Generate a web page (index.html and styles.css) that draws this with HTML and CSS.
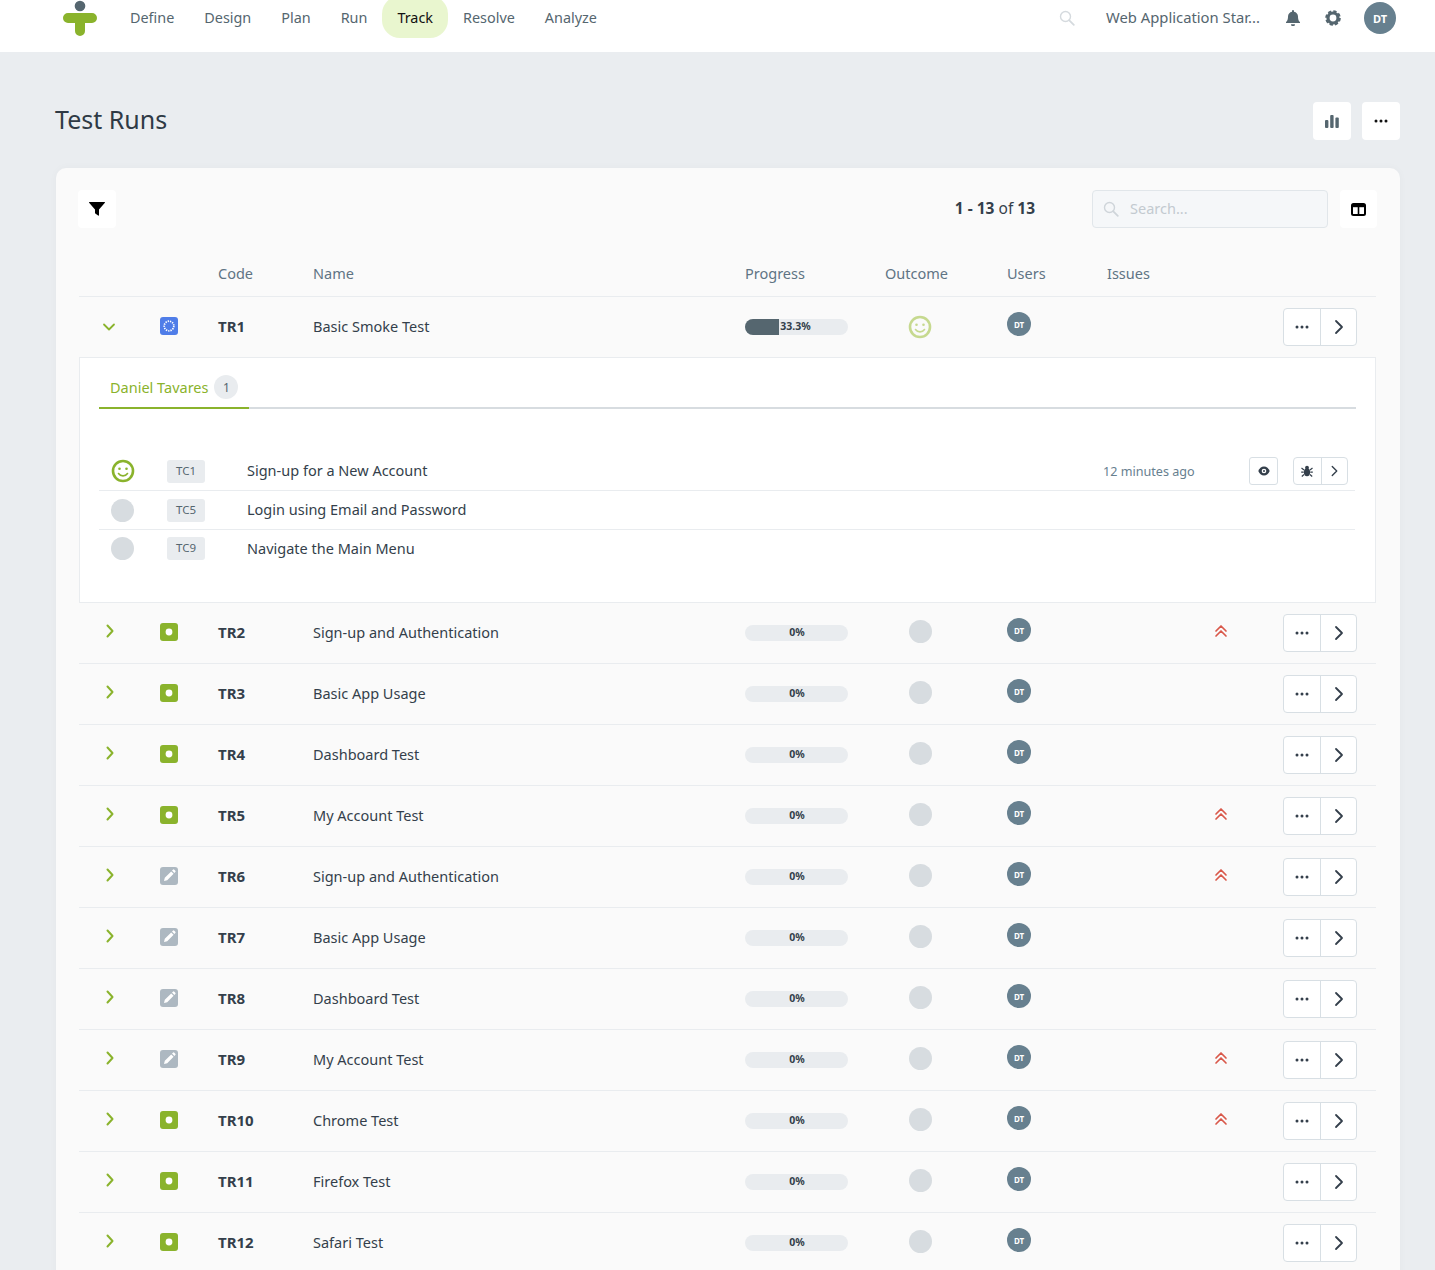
FILE: index.html
```html
<!DOCTYPE html>
<html lang="en">
<head>
  <meta charset="UTF-8" />
  <title>Test Runs</title>
  <link rel="stylesheet" href="styles.css">
</head>
<body>
  <svg class="sprite" aria-hidden="true">
    <symbol id="i-right" viewBox="0 0 12 16"><path d="M3 2l6 6-6 6" fill="none" stroke="currentColor" stroke-width="1.8" stroke-linecap="round" stroke-linejoin="round"/></symbol>
    <symbol id="i-chev" viewBox="0 0 12 16"><path d="M3.500 2.500l5 5.500-5 5.500" fill="none" stroke="currentColor" stroke-width="2" stroke-linecap="round" stroke-linejoin="round"/></symbol>
    <symbol id="i-down" viewBox="0 0 16 12"><path d="M3 3.500l5 5 5-5" fill="none" stroke="currentColor" stroke-width="1.8" stroke-linecap="round" stroke-linejoin="round"/></symbol>
    <symbol id="i-dots" viewBox="0 0 14 4"><circle cx="2" cy="2" r="1.5" fill="currentColor"/><circle cx="7" cy="2" r="1.5" fill="currentColor"/><circle cx="12" cy="2" r="1.5" fill="currentColor"/></symbol>
    <symbol id="i-run" viewBox="0 0 18 18"><rect width="18" height="18" rx="3" fill="#8ab32c"/><circle cx="9" cy="9" r="3.4" fill="#fff"/></symbol>
    <symbol id="i-draft" viewBox="0 0 18 18"><rect width="18" height="18" rx="3" fill="#adb8c1"/><path d="M4 14l.8-3.2 6.4-6.4 2.4 2.4-6.4 6.4zM12 3.6l.9-.9a1 1 0 0 1 1.4 0l1 1a1 1 0 0 1 0 1.4l-.9.9z" fill="#fff"/></symbol>
    <symbol id="i-up2" viewBox="0 0 14 14"><path d="M2 7l5-5 5 5M2 12l5-5 5 5" fill="none" stroke="#d9584a" stroke-width="1.7" stroke-linecap="round" stroke-linejoin="round"/></symbol>
    <symbol id="i-smile" viewBox="0 0 24 24"><circle cx="12" cy="12" r="10" fill="none" stroke="currentColor" stroke-width="2.6"/><circle cx="8.5" cy="9.8" r="1.3" fill="currentColor"/><circle cx="15.5" cy="9.8" r="1.3" fill="currentColor"/><path d="M7.5 14.5c1.2 1.7 2.7 2.4 4.5 2.4s3.300-.7 4.500-2.400" fill="none" stroke="currentColor" stroke-width="1.6" stroke-linecap="round"/></symbol>
    <symbol id="i-search" viewBox="0 0 16 16"><circle cx="6.500" cy="6.500" r="5" fill="none" stroke="currentColor" stroke-width="1.400"/><path d="M10.300 10.300l4.500 4.500" stroke="currentColor" stroke-width="1.800" stroke-linecap="round"/></symbol>
  </svg>

  <header class="topbar">
    <svg class="logo" width="36" height="36" viewBox="0 0 36 36">
      <circle cx="18" cy="6" r="5.300" fill="#55666f"/>
      <path d="M6 13h24a5 5 0 0 1 0 10h-7v8a5 5 0 0 1-10 0v-8H6a5 5 0 0 1 0-10z" fill="#8ab32c"/>
    </svg>
    <nav class="nav">
      <a class="nav-link">Define</a>
      <a class="nav-link">Design</a>
      <a class="nav-link">Plan</a>
      <a class="nav-link">Run</a>
      <a class="nav-link active">Track</a>
      <a class="nav-link">Resolve</a>
      <a class="nav-link">Analyze</a>
    </nav>
    <div class="topbar-right">
      <svg class="top-search" width="16" height="16"><use href="#i-search"/></svg>
      <span class="project">Web Application Star...</span>
      <svg class="top-icon" width="14" height="16" viewBox="0 0 14 16"><path d="M7 0a1 1 0 0 1 1 1v.7c2.400.4 4 2.400 4 4.800 0 3.800 1.200 4.700 2 5.600v1H0v-1c.8-.9 2-1.800 2-5.600 0-2.400 1.600-4.400 4-4.800V1a1 1 0 0 1 1-1zM5 14.200h4a2 2 0 0 1-4 0z" fill="#55666f"/></svg>
      <svg class="top-icon gear" width="16" height="16" viewBox="0 0 16 16"><circle cx="8" cy="8" r="5" fill="none" stroke="#55666f" stroke-width="3.200"/><circle cx="8" cy="8" r="6.600" fill="none" stroke="#55666f" stroke-width="2.400" stroke-dasharray="3.200 2"/></svg>
      <span class="avatar avatar-lg">DT</span>
    </div>
  </header>

  <main class="page">
    <div class="page-head">
      <h1>Test Runs</h1>
      <div class="page-actions">
        <button class="tool-btn"><svg width="14" height="14" viewBox="0 0 14 14"><g fill="#55666f"><rect y="6" width="3.400" height="8" rx="1"/><rect x="5.200" y="1" width="3.400" height="13" rx="1"/><rect x="10.400" y="3.500" width="3.400" height="10.500" rx="1"/></g></svg></button>
        <button class="tool-btn"><svg class="dots-dark" width="14" height="4"><use href="#i-dots"/></svg></button>
      </div>
    </div>

    <section class="card">
      <div class="toolbar">
        <button class="tool-btn"><svg width="16" height="14" viewBox="0 0 16 14"><path d="M.5 0h15a.5.5 0 0 1 .4.800L10 7.500V13a.6.6 0 0 1-.9.500l-2.800-2a.6.6 0 0 1-.300-.500V7.500L.1.800A.5.500 0 0 1 .5 0z" fill="#000"/></svg></button>
        <span class="pager"><b>1 - 13</b> of <b>13</b></span>
        <label class="search-box">
          <svg width="16" height="16"><use href="#i-search"/></svg>
          <input type="text" placeholder="Search...">
        </label>
        <button class="tool-btn tool-btn-col"><svg width="15" height="13" viewBox="0 0 15 13"><rect x="1" y="1" width="13" height="11" rx="1.500" fill="none" stroke="#000" stroke-width="2"/><path d="M1 3h13" stroke="#000" stroke-width="2.400"/><path d="M7.500 2v10" stroke="#000" stroke-width="1.600"/></svg></button>
      </div>

      <div class="row-grid table-head">
        <span></span><span></span>
        <span>Code</span><span>Name</span><span>Progress</span><span>Outcome</span><span>Users</span><span>Issues</span><span></span>
      </div>

      <div class="row-grid run">
        <svg class="chev chev-open" width="16" height="12"><use href="#i-down"/></svg>
        <svg class="status" width="18" height="18" viewBox="0 0 18 18"><rect width="18" height="18" rx="3" fill="#4f7de8"/><circle cx="9" cy="9" r="4.800" fill="none" stroke="#fff" stroke-width="1.700" stroke-dasharray="1.300 1"/></svg>
        <b class="code">TR1</b>
        <span class="name">Basic Smoke Test</span>
        <div class="progress"><div class="progress-fill"></div><span class="progress-text">33.3%</span></div>
        <svg class="outcome smile-light" width="24" height="24"><use href="#i-smile"/></svg>
        <span class="avatar">DT</span>
        <span></span>
        <div class="btn-group"><button><svg width="14" height="4"><use href="#i-dots"/></svg></button><button><svg width="12" height="16"><use href="#i-right"/></svg></button></div>
      </div>

      <div class="panel">
        <div class="tabs">
          <a class="tab">Daniel Tavares <span class="tab-count">1</span></a>
        </div>
        <div class="cases">
          <div class="case">
            <svg class="smile" width="24" height="24"><use href="#i-smile"/></svg>
            <span class="tc">TC1</span>
            <span class="name">Sign-up for a New Account</span>
            <span class="time">12 minutes ago</span>
            <button class="mini-btn"><svg width="12" height="10" viewBox="0 0 12 10"><path d="M6 .5C3.400.5 1.300 2.400.3 5c1 2.600 3.100 4.500 5.700 4.500s4.700-1.900 5.700-4.500C10.700 2.400 8.600.5 6 .5z" fill="#343f4b"/><circle cx="6" cy="5" r="2.300" fill="#fff"/><circle cx="6" cy="5" r="1" fill="#343f4b"/></svg></button>
            <div class="btn-group btn-group-sm">
              <button><svg width="12" height="12" viewBox="0 0 12 12"><g fill="#343f4b"><circle cx="6" cy="2.600" r="1.900"/><ellipse cx="6" cy="7.300" rx="3.100" ry="4"/></g><path d="M.5 3l2.500 2M11.500 3L9 5M.2 7.200h2.500M11.800 7.200H9.300M.8 11.500L3 9.500M11.200 11.500L9 9.500" stroke="#343f4b" stroke-width="1.200"/></svg></button>
              <button><svg width="9" height="12" viewBox="0 0 12 16"><use href="#i-right"/></svg></button>
            </div>
          </div>
          <div class="case">
            <span class="dot"></span>
            <span class="tc">TC5</span>
            <span class="name">Login using Email and Password</span>
          </div>
          <div class="case case-last">
            <span class="dot"></span>
            <span class="tc">TC9</span>
            <span class="name">Navigate the Main Menu</span>
          </div>
        </div>
      </div>

      <div class="row-grid run">
        <svg class="chev" width="12" height="16"><use href="#i-chev"/></svg>
        <svg class="status" width="18" height="18"><use href="#i-run"/></svg>
        <b class="code">TR2</b>
        <span class="name">Sign-up and Authentication</span>
        <div class="progress progress-empty"><span class="progress-text">0%</span></div>
        <span class="dot outcome"></span>
        <span class="avatar">DT</span>
        <svg class="issue" width="14" height="14"><use href="#i-up2"/></svg>
        <div class="btn-group"><button><svg width="14" height="4"><use href="#i-dots"/></svg></button><button><svg width="12" height="16"><use href="#i-right"/></svg></button></div>
      </div>

      <div class="row-grid run">
        <svg class="chev" width="12" height="16"><use href="#i-chev"/></svg>
        <svg class="status" width="18" height="18"><use href="#i-run"/></svg>
        <b class="code">TR3</b>
        <span class="name">Basic App Usage</span>
        <div class="progress progress-empty"><span class="progress-text">0%</span></div>
        <span class="dot outcome"></span>
        <span class="avatar">DT</span>
        <span></span>
        <div class="btn-group"><button><svg width="14" height="4"><use href="#i-dots"/></svg></button><button><svg width="12" height="16"><use href="#i-right"/></svg></button></div>
      </div>

      <div class="row-grid run">
        <svg class="chev" width="12" height="16"><use href="#i-chev"/></svg>
        <svg class="status" width="18" height="18"><use href="#i-run"/></svg>
        <b class="code">TR4</b>
        <span class="name">Dashboard Test</span>
        <div class="progress progress-empty"><span class="progress-text">0%</span></div>
        <span class="dot outcome"></span>
        <span class="avatar">DT</span>
        <span></span>
        <div class="btn-group"><button><svg width="14" height="4"><use href="#i-dots"/></svg></button><button><svg width="12" height="16"><use href="#i-right"/></svg></button></div>
      </div>

      <div class="row-grid run">
        <svg class="chev" width="12" height="16"><use href="#i-chev"/></svg>
        <svg class="status" width="18" height="18"><use href="#i-run"/></svg>
        <b class="code">TR5</b>
        <span class="name">My Account Test</span>
        <div class="progress progress-empty"><span class="progress-text">0%</span></div>
        <span class="dot outcome"></span>
        <span class="avatar">DT</span>
        <svg class="issue" width="14" height="14"><use href="#i-up2"/></svg>
        <div class="btn-group"><button><svg width="14" height="4"><use href="#i-dots"/></svg></button><button><svg width="12" height="16"><use href="#i-right"/></svg></button></div>
      </div>

      <div class="row-grid run">
        <svg class="chev" width="12" height="16"><use href="#i-chev"/></svg>
        <svg class="status" width="18" height="18"><use href="#i-draft"/></svg>
        <b class="code">TR6</b>
        <span class="name">Sign-up and Authentication</span>
        <div class="progress progress-empty"><span class="progress-text">0%</span></div>
        <span class="dot outcome"></span>
        <span class="avatar">DT</span>
        <svg class="issue" width="14" height="14"><use href="#i-up2"/></svg>
        <div class="btn-group"><button><svg width="14" height="4"><use href="#i-dots"/></svg></button><button><svg width="12" height="16"><use href="#i-right"/></svg></button></div>
      </div>

      <div class="row-grid run">
        <svg class="chev" width="12" height="16"><use href="#i-chev"/></svg>
        <svg class="status" width="18" height="18"><use href="#i-draft"/></svg>
        <b class="code">TR7</b>
        <span class="name">Basic App Usage</span>
        <div class="progress progress-empty"><span class="progress-text">0%</span></div>
        <span class="dot outcome"></span>
        <span class="avatar">DT</span>
        <span></span>
        <div class="btn-group"><button><svg width="14" height="4"><use href="#i-dots"/></svg></button><button><svg width="12" height="16"><use href="#i-right"/></svg></button></div>
      </div>

      <div class="row-grid run">
        <svg class="chev" width="12" height="16"><use href="#i-chev"/></svg>
        <svg class="status" width="18" height="18"><use href="#i-draft"/></svg>
        <b class="code">TR8</b>
        <span class="name">Dashboard Test</span>
        <div class="progress progress-empty"><span class="progress-text">0%</span></div>
        <span class="dot outcome"></span>
        <span class="avatar">DT</span>
        <span></span>
        <div class="btn-group"><button><svg width="14" height="4"><use href="#i-dots"/></svg></button><button><svg width="12" height="16"><use href="#i-right"/></svg></button></div>
      </div>

      <div class="row-grid run">
        <svg class="chev" width="12" height="16"><use href="#i-chev"/></svg>
        <svg class="status" width="18" height="18"><use href="#i-draft"/></svg>
        <b class="code">TR9</b>
        <span class="name">My Account Test</span>
        <div class="progress progress-empty"><span class="progress-text">0%</span></div>
        <span class="dot outcome"></span>
        <span class="avatar">DT</span>
        <svg class="issue" width="14" height="14"><use href="#i-up2"/></svg>
        <div class="btn-group"><button><svg width="14" height="4"><use href="#i-dots"/></svg></button><button><svg width="12" height="16"><use href="#i-right"/></svg></button></div>
      </div>

      <div class="row-grid run">
        <svg class="chev" width="12" height="16"><use href="#i-chev"/></svg>
        <svg class="status" width="18" height="18"><use href="#i-run"/></svg>
        <b class="code">TR10</b>
        <span class="name">Chrome Test</span>
        <div class="progress progress-empty"><span class="progress-text">0%</span></div>
        <span class="dot outcome"></span>
        <span class="avatar">DT</span>
        <svg class="issue" width="14" height="14"><use href="#i-up2"/></svg>
        <div class="btn-group"><button><svg width="14" height="4"><use href="#i-dots"/></svg></button><button><svg width="12" height="16"><use href="#i-right"/></svg></button></div>
      </div>

      <div class="row-grid run">
        <svg class="chev" width="12" height="16"><use href="#i-chev"/></svg>
        <svg class="status" width="18" height="18"><use href="#i-run"/></svg>
        <b class="code">TR11</b>
        <span class="name">Firefox Test</span>
        <div class="progress progress-empty"><span class="progress-text">0%</span></div>
        <span class="dot outcome"></span>
        <span class="avatar">DT</span>
        <span></span>
        <div class="btn-group"><button><svg width="14" height="4"><use href="#i-dots"/></svg></button><button><svg width="12" height="16"><use href="#i-right"/></svg></button></div>
      </div>

      <div class="row-grid run">
        <svg class="chev" width="12" height="16"><use href="#i-chev"/></svg>
        <svg class="status" width="18" height="18"><use href="#i-run"/></svg>
        <b class="code">TR12</b>
        <span class="name">Safari Test</span>
        <div class="progress progress-empty"><span class="progress-text">0%</span></div>
        <span class="dot outcome"></span>
        <span class="avatar">DT</span>
        <span></span>
        <div class="btn-group"><button><svg width="14" height="4"><use href="#i-dots"/></svg></button><button><svg width="12" height="16"><use href="#i-right"/></svg></button></div>
      </div>
    </section>
  </main>
</body>
</html>
```

FILE: styles.css
```css
html, body {
  height: 100%;
  overflow: hidden;
}
body {
  margin: 0;
  background-color: #eaedf0;
  color: #343f4b;
  font-family: "Noto Sans", sans-serif;
  font-size: 14.5px;
}
button {
  font-family: inherit;
  cursor: pointer;
}
.sprite {
  display: none;
}

/* top bar */
.topbar {
  display: flex;
  height: 52px;
  padding-left: 62px;
  padding-right: 39px;
  background-color: #fff;
  overflow: hidden;
}
.logo {
  margin-right: 17px;
}
.nav {
  display: flex;
}
.nav-link {
  display: flex;
  align-items: center;
  height: 36px;
  padding: 0 15px 2px;
  box-sizing: border-box;
  color: #55666f;
  font-size: 14.4px;
}
.nav-link.active {
  height: 42px;
  margin-top: -4px;
  padding-bottom: 0;
  border-radius: 18px;
  background-color: #e9f6cf;
  color: #111;
}
.topbar-right {
  display: flex;
  align-items: center;
  height: 36px;
  margin-left: auto;
}
.top-search {
  margin-right: 31px;
  color: #d5dade;
}
.project {
  width: 155px;
  margin-right: 25px;
  padding-bottom: 2px;
  color: #55666f;
  font-size: 14.8px;
  white-space: nowrap;
}
.top-icon {
  margin-right: 25px;
}
.top-icon.gear {
  margin-right: 23px;
}
.avatar {
  display: flex;
  align-items: center;
  justify-content: center;
  width: 24px;
  height: 24px;
  margin-top: -6px;
  border-radius: 50%;
  background-color: #67808f;
  color: #fff;
  font-size: 8px;
  font-weight: 700;
}
.avatar-lg {
  width: 32px;
  height: 32px;
  margin-top: 0;
  font-size: 11px;
}

/* page */
.page {
  padding: 50px 35px 0 56px;
}
.page-head {
  display: flex;
  align-items: center;
  justify-content: space-between;
  margin-bottom: 28px;
}
h1 {
  margin: 0 0 4px -1px;
  font-size: 25px;
  font-weight: 400;
  color: #2f3a45;
}
.page-actions {
  display: flex;
  gap: 11px;
}
.tool-btn {
  display: flex;
  align-items: center;
  justify-content: center;
  width: 38px;
  height: 38px;
  padding: 0;
  border: 0;
  border-radius: 4px;
  background-color: #fff;
}
.dots-dark {
  color: #111;
}

/* card */
.card {
  height: 1200px;
  padding: 22px 24px 0 23px;
  border-radius: 10px;
  background-color: #fafafa;
  box-shadow: 0 0 8px rgba(0,0,0,0.03);
}
.toolbar {
  display: flex;
  align-items: center;
  margin: 0 -1px;
}
.pager {
  margin-left: auto;
  margin-right: 57px;
  padding-bottom: 2px;
  font-size: 15.5px;
}
.search-box {
  display: flex;
  align-items: center;
  gap: 11px;
  width: 236px;
  height: 38px;
  padding-left: 10px;
  box-sizing: border-box;
  border: 1px solid #e1e6ea;
  border-radius: 4px;
  background-color: #f5f7f9;
  color: #cfd5da;
}
.search-box input {
  width: 170px;
  padding: 0 0 2px;
  border: 0;
  outline: 0;
  background: transparent;
  font-family: inherit;
  font-size: 14.5px;
}
.search-box input::placeholder {
  color: #c3cad0;
}
.tool-btn-col {
  width: 37px;
  margin-left: 12px;
}

/* table */
.row-grid {
  display: grid;
  grid-template-columns: 81px 58px 95px 432px 140px 122px 100px 176px 93px;
  align-items: center;
  border-bottom: 1px solid #e9ecef;
}
.table-head {
  height: 69px;
  padding-top: 21px;
  box-sizing: border-box;
  color: #5f7484;
}
.run {
  height: 61px;
  box-sizing: border-box;
}
.run + .panel {
  margin-top: -1px;
}
.chev {
  justify-self: start;
  margin-top: -4px;
  margin-left: 25px;
  color: #8ab32c;
}
.chev-open {
  margin-top: 0;
  margin-left: 22px;
}
.code {
  padding-bottom: 2px;
  font-size: 15px;
  font-weight: 700;
}
.name {
  padding-bottom: 2px;
}
.status {
  display: block;
  margin-top: -3px;
}
.progress {
  display: flex;
  align-items: center;
  width: 103px;
  height: 16px;
  border-radius: 8px;
  background-color: #e9ecef;
  overflow: hidden;
}
.progress-fill {
  width: 33.3%;
  height: 100%;
  background-color: #55666f;
}
.progress-text {
  margin-left: 1px;
  padding-bottom: 2px;
  font-size: 10.5px;
  font-weight: 700;
}
.progress-empty {
  justify-content: center;
}
.outcome {
  margin-left: 23px;
}
.dot.outcome {
  margin-top: -4px;
  margin-left: 24px;
}
.smile-light {
  color: #c6d98f;
}
.smile {
  color: #8ab32c;
}
.dot {
  display: block;
  width: 23px;
  height: 23px;
  border-radius: 50%;
  background-color: #d7dce0;
}
.issue {
  margin-left: 107px;
  margin-top: -4px;
}
.btn-group {
  display: flex;
  width: 74px;
  height: 38px;
  box-sizing: border-box;
  border: 1px solid #d8dfe4;
  border-radius: 4px;
  background-color: #fff;
}
.btn-group button {
  display: flex;
  align-items: center;
  justify-content: center;
  flex: 0 0 50%;
  box-sizing: border-box;
  padding: 0;
  border: 0;
  background: transparent;
  color: #343f4b;
}
.btn-group button + button {
  border-left: 1px solid #d8dfe4;
}

/* expanded panel */
.panel {
  height: 246px;
  padding: 0 19px 0 19px;
  box-sizing: border-box;
  border: 1px solid #e9ecef;
  background-color: #fff;
}
.tabs {
  height: 51px;
  box-sizing: border-box;
  border-bottom: 2px solid #d7dce0;
}
.tab {
  display: inline-flex;
  align-items: center;
  gap: 6px;
  width: 150px;
  height: 51px;
  padding: 9px 0 0 11px;
  box-sizing: border-box;
  border-bottom: 2px solid #8ab32c;
  color: #8ab32c;
}
.tab-count {
  display: flex;
  align-items: center;
  justify-content: center;
  width: 24px;
  height: 24px;
  border-radius: 50%;
  background-color: #e9ecef;
  color: #55666f;
  font-size: 12px;
}
.cases {
  margin-top: 43px;
  margin-right: 1px;
}
.case {
  display: grid;
  grid-template-columns: 56px 80px 856px 146px 44px 55px;
  align-items: center;
  height: 39px;
  padding-left: 12px;
  box-sizing: border-box;
  border-bottom: 1px solid #e9ecef;
}
.case-last {
  height: 37px;
  border-bottom: 0;
}
.tc {
  display: flex;
  align-items: center;
  justify-content: center;
  width: 38px;
  height: 23px;
  padding-bottom: 2px;
  box-sizing: border-box;
  border-radius: 3px;
  background-color: #e9ecef;
  color: #55666f;
  font-size: 11.5px;
}
.time {
  color: #67808f;
  font-size: 12.6px;
}
.mini-btn {
  display: flex;
  align-items: center;
  justify-content: center;
  width: 29px;
  height: 28px;
  padding: 0;
  border: 1px solid #d8dfe4;
  border-radius: 3px;
  background-color: #fff;
}
.btn-group-sm {
  width: 55px;
  height: 28px;
}
```
